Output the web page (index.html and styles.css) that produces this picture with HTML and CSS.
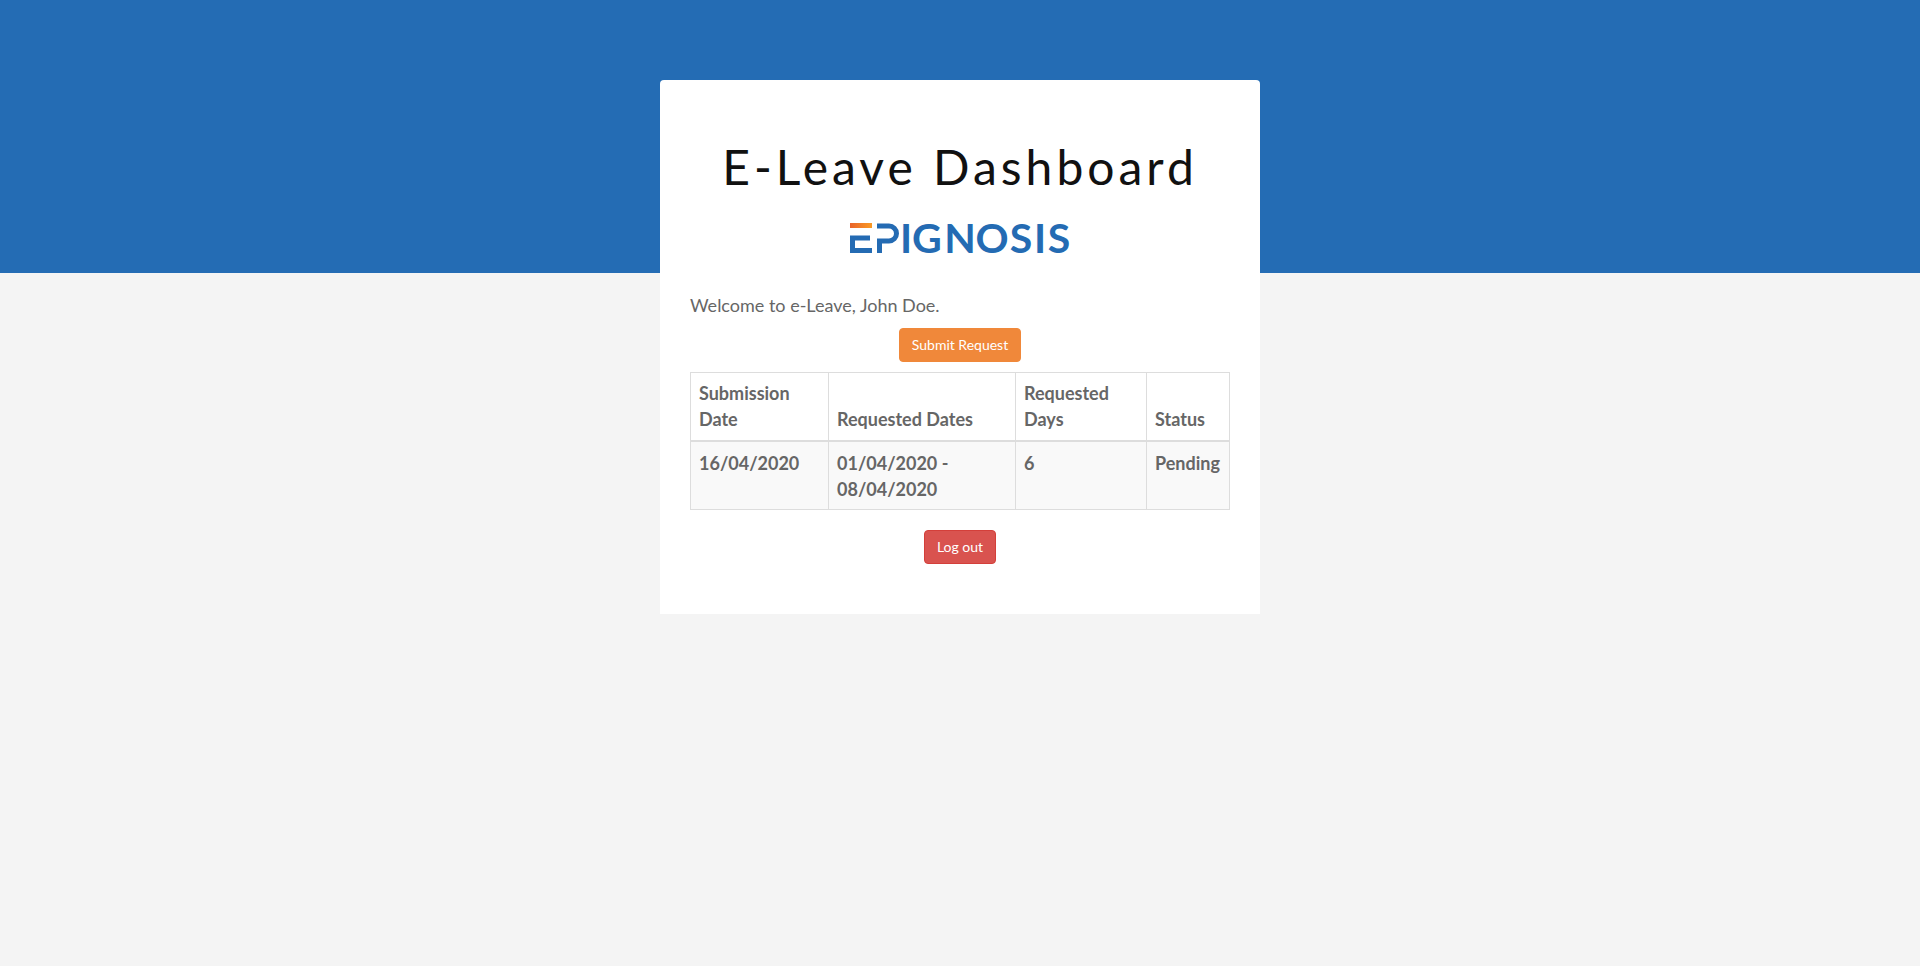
FILE: index.html
```html
<!DOCTYPE html>
<html lang="en">
<head>
<meta charset="utf-8">
<title>E-Leave Dashboard</title>
<meta name="viewport" content="width=device-width, initial-scale=1">
<link rel="stylesheet" href="styles.css">
</head>
<body>
<main class="card">
  <h1 class="title">E-Leave Dashboard</h1>
  <svg class="logo" viewBox="0 0 220 30" role="img" aria-label="Epignosis">
    <defs>
      <linearGradient id="accent" x1="0" y1="0" x2="1" y2="0">
        <stop offset="0" stop-color="#e8632a"/>
        <stop offset="1" stop-color="#fa9a24"/>
      </linearGradient>
    </defs>
    <rect width="22" height="5" fill="url(#accent)"/>
    <path fill="none" stroke="#246bb3" stroke-width="5" d="M20 15H2.500V27.500H22"/>
    <path fill="none" stroke="#246bb3" stroke-width="5" d="M27 3H39A7.500 7.500 0 0 1 39 18H29.500V30"/>
    <text class="logo-text" y="30" x="56 77 110 142 171 190 209">IGNOSIS</text>
  </svg>
  <p class="welcome">Welcome to e-Leave, John Doe.</p>
  <button class="btn btn-submit" type="button">Submit Request</button>
  <table class="requests">
    <colgroup>
      <col class="col-submitted">
      <col class="col-dates">
      <col class="col-days">
      <col>
    </colgroup>
    <thead>
      <tr>
        <th scope="col">Submission Date</th>
        <th scope="col">Requested Dates</th>
        <th scope="col">Requested Days</th>
        <th scope="col">Status</th>
      </tr>
    </thead>
    <tbody>
      <tr>
        <td>16/04/2020</td>
        <td>01/04/2020 - 08/04/2020</td>
        <td>6</td>
        <td>Pending</td>
      </tr>
    </tbody>
  </table>
  <button class="btn btn-logout" type="button">Log out</button>
</main>
</body>
</html>
```
FILE: styles.css
```css
* {
  box-sizing: border-box;
}

body {
  margin: 0;
  padding: 80px 16px;
  background: #f4f4f4 linear-gradient(#246cb4, #246cb4) top / 100% 273px no-repeat;
  color: #666;
  font-family: Lato, "Liberation Sans", sans-serif;
  font-size: 18px;
  line-height: 26px;
}

.card {
  display: flex;
  flex-direction: column;
  align-items: center;
  max-width: 600px;
  margin: 0 auto;
  padding: 50px 30px;
  background: #fff;
  border-radius: 4px 4px 0 0;
}

.title {
  margin: 0 0 19px;
  color: #111;
  font-size: 48px;
  font-weight: 400;
  line-height: 74px;
  letter-spacing: 4px;
  text-align: center;
}

.logo {
  width: 220px;
  height: 30px;
  overflow: visible;
}

.logo-text {
  fill: #246bb3;
  font-size: 41px;
  font-weight: 700;
  text-anchor: middle;
}

.welcome {
  align-self: stretch;
  margin: 39px 0 10px;
}

.btn {
  height: 34px;
  padding: 0 12px;
  border: 1px solid;
  border-radius: 4px;
  color: #fff;
  font-family: inherit;
  font-size: 14px;
  line-height: 20px;
  cursor: pointer;
}

.btn-submit {
  background: #f0883a;
  border-color: #f0883a;
}

.btn-logout {
  background: #d9534f;
  border-color: #d43f3a;
}

.requests {
  width: 100%;
  margin: 10px 0 20px;
  border-collapse: collapse;
  font-weight: 700;
}

.col-submitted {
  width: 138px;
}

.col-dates {
  width: 187px;
}

.col-days {
  width: 131px;
}

.requests th,
.requests td {
  padding: 8px 8px 7px;
  border: 1px solid #ddd;
  text-align: left;
  vertical-align: top;
}

.requests th {
  padding: 7px 8px 8px;
  border-bottom-width: 2px;
  vertical-align: bottom;
}

.requests tbody tr {
  background: #f9f9f9;
}
```
